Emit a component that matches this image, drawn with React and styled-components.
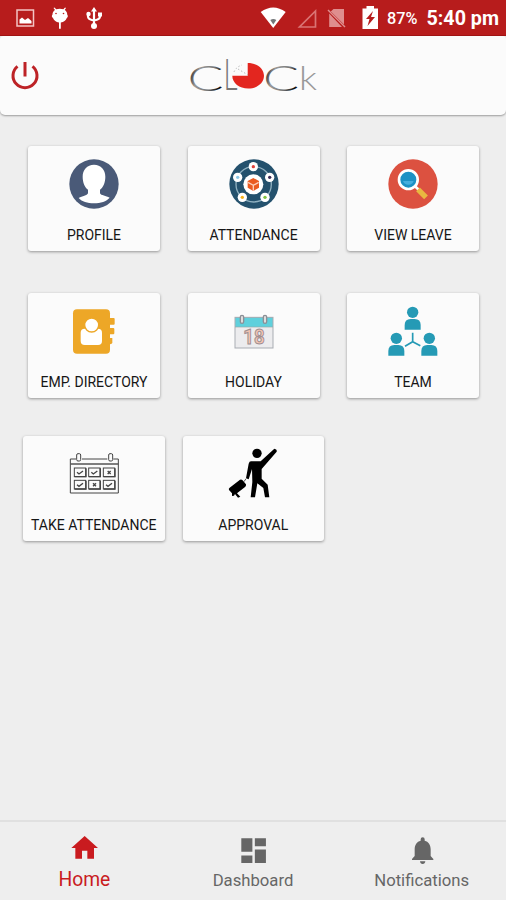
import React, { useState } from "react";
import styled, { createGlobalStyle } from "styled-components";

const GlobalStyle = createGlobalStyle`
  * {
    box-sizing: border-box;
  }
  body {
    margin: 0;
    background-color: #eee;
    font-family: Roboto, "Liberation Sans", sans-serif;
  }
`;

const Screen = styled.div`
  display: flex;
  flex-direction: column;
  height: 900px;
  width: 506px;
  overflow: hidden;
  background-color: #eee;
`;

const StatusBar = styled.div`
  flex: none;
  height: 36px;
  display: flex;
  align-items: flex-start;
  padding-left: 16px;
  color: #fff;
  background-color: #b71c1c;
  border-bottom: 1px solid #a31414;
`;

const StatusIcon = styled.svg`
  flex: none;
  display: block;
  height: 36px;
  width: ${(props) => props.$width}px;
  margin-left: ${(props) => props.$gap || 0}px;
`;

const StatusText = styled.span`
  line-height: 38px;
  white-space: nowrap;
  font-weight: ${(props) => props.$weight};
  font-size: ${(props) => props.$size}px;
  margin-left: ${(props) => props.$gap}px;
`;

const Header = styled.header`
  flex: none;
  height: 78.500px;
  display: flex;
  align-items: flex-start;
  background-color: #fbfbfb;
  border-radius: 3px 3px 5px 5px;
  box-shadow: 0 1px 2px rgba(0, 0, 0, 0.35);
`;

const PowerButton = styled.button`
  margin: 24px 0 0 10px;
  padding: 0;
  border: 0;
  background: none;
  cursor: pointer;
  svg {
    display: block;
  }
`;

const Logo = styled.svg`
  display: block;
  margin: 4px 0 0 140px;
`;

const Content = styled.main`
  flex: 1;
  padding-top: 31.500px;
`;

const CardRow = styled.div`
  display: flex;
  gap: ${(props) => (props.$wide ? 18 : 27.5)}px;
  padding-left: ${(props) => (props.$wide ? 23 : 28)}px;
  margin-bottom: ${(props) => props.$space || 0}px;
`;

const Card = styled.div`
  width: ${(props) => (props.$wide ? 141.5 : 132)}px;
  height: 105px;
  padding-top: 13px;
  display: flex;
  flex-direction: column;
  align-items: center;
  border-radius: 3px;
  cursor: pointer;
  background-color: #fbfbfb;
  box-shadow: 0 1px 3px rgba(0, 0, 0, 0.38);
`;

const CardIcon = styled.svg`
  display: block;
  flex: none;
  width: 50px;
  height: 50px;
  overflow: visible;
`;

const CardLabel = styled.span`
  margin-top: 15.500px;
  line-height: 20px;
  font-size: 14px;
  white-space: nowrap;
  color: #161616;
`;

const BottomNav = styled.nav`
  flex: none;
  height: 80px;
  display: flex;
  border-top: 2px solid #e0e0e0;
  background-color: #eee;
`;

const NavItem = styled.button`
  flex: 1;
  padding: ${(props) => (props.$active ? 10 : 11.5)}px 0 0;
  border: 0;
  background: none;
  display: flex;
  flex-direction: column;
  align-items: center;
  cursor: pointer;
  font-family: inherit;
  color: ${(props) => (props.$active ? "#c91b1f" : "#666")};
  svg {
    display: block;
    width: 32px;
    height: 32px;
  }
`;

const NavLabel = styled.span`
  line-height: ${(props) => (props.$active ? 32 : 29)}px;
  font-size: ${(props) => (props.$active ? 19.3 : 16.7)}px;
`;

const ProfileIcon = () => (
  <CardIcon viewBox="162 72 150 150">
    <circle cx="237" cy="147" r="74" fill="#4a5a78" />
    <path
      fill="#fff"
      d="M237 89c-21 0-34 15-34 36 0 17 6 31 16 39v11c-3 7-17 8-28 14 10 11 26 16 46 16s37-6 47-17c-11-6-26-6-29-13v-11c10-8 16-22 16-39 0-21-13-36-34-36z"
    />
  </CardIcon>
);

const AttendanceIcon = () => (
  <CardIcon viewBox="160 72 150 150">
    <circle cx="235" cy="147" r="74" fill="#24516d" />
    <circle
      cx="234"
      cy="148"
      r="53"
      fill="none"
      stroke="#8fb0c0"
      strokeWidth="4"
    />
    {[
      [233, 95, "#e0403a"],
      [282, 127, "#3a2a55"],
      [268, 187, "#7fc241"],
      [200, 187, "#f5b21c"],
      [186, 127, "#8cc8e8"],
    ].map(([x, y, color]) => (
      <g key={color}>
        <circle cx={x} cy={y} r="14" fill="#fff" />
        <circle cx={x} cy={y} r="5" fill={color} />
      </g>
    ))}
    <circle cx="233" cy="148" r="30" fill="#fff" />
    <path fill="#ea5b21" d="M233 129l17 9v20l-17 10-17-10v-20z" />
    <path
      d="M217 142l16 9 16-9M233 151v16"
      fill="none"
      stroke="#fbd0bd"
      strokeWidth="4"
    />
  </CardIcon>
);

const ViewLeaveIcon = () => (
  <CardIcon viewBox="158 72 150 150">
    <circle cx="233" cy="147" r="74" fill="#dc5140" />
    <path d="M239 154l12 11" stroke="#fff" strokeWidth="8" />
    <path d="M248 163l24 24" stroke="#e9b840" strokeWidth="16" />
    <circle cx="219" cy="134" r="27" fill="#1e91c4" />
    <path d="M203 138a17 17 0 0 0 32 0z" fill="#46aede" />
    <circle
      cx="219"
      cy="134"
      r="28"
      fill="none"
      stroke="#fff"
      strokeWidth="8"
    />
  </CardIcon>
);

const DirectoryIcon = () => (
  <CardIcon viewBox="162 69 150 150">
    <g fill="#eda727">
      <rect x="174" y="79" width="111" height="133" rx="12" />
      <rect x="280" y="105" width="19" height="20" rx="3" />
      <rect x="280" y="135" width="18" height="19" rx="3" />
      <path d="M280 165h12v15q-3 4-8 4h-4z" />
    </g>
    <rect x="197" y="137" width="64" height="49" rx="12" fill="#fff" />
    <circle
      cx="230"
      cy="126"
      r="21"
      fill="#fff"
      stroke="#eda727"
      strokeWidth="4"
    />
  </CardIcon>
);

const HolidayIcon = () => (
  <CardIcon viewBox="160 69 150 150">
    <rect x="178" y="103" width="114" height="92" fill="#ececee" />
    <rect x="178" y="102" width="114" height="30" fill="#5fd0dc" />
    <rect
      x="178"
      y="103"
      width="114"
      height="92"
      fill="none"
      stroke="#a9adb3"
      strokeWidth="3"
    />
    <path d="M178 132h114" stroke="#9aa" strokeWidth="2" />
    <rect x="194" y="97" width="10" height="24" rx="5" fill="#ddd" stroke="#8b8f96" strokeWidth="4" />
    <rect x="263" y="97" width="10" height="24" rx="5" fill="#ddd" stroke="#8b8f96" strokeWidth="4" />
    <text
      x="235"
      y="184"
      textAnchor="middle"
      fontSize="60"
      fontWeight="700"
      textLength="64"
      lengthAdjust="spacingAndGlyphs"
      fill="#f6c6b3"
      stroke="#a08f92"
      strokeWidth="3"
    >
      18
    </text>
  </CardIcon>
);

const Person = ({ x, y }) => (
  <g transform={`translate(${x} ${y})`}>
    <circle cx="0" cy="17" r="17" />
    <path d="M-24 69v-14q0-18 18-18h12q18 0 18 18v14z" />
  </g>
);

const TeamIcon = () => (
  <CardIcon viewBox="158 69 150 150">
    <g fill="#259ab5">
      <Person x={232} y={71} />
      <Person x={183} y={149} />
      <Person x={282} y={149} />
    </g>
    <path
      d="M232 149v27M209 190l23-14 23 12"
      fill="none"
      stroke="#259ab5"
      strokeWidth="5"
    />
  </CardIcon>
);

const TakeAttendanceIcon = () => (
  <CardIcon viewBox="161 69 150 150">
    <g fill="none" stroke="#444" strokeWidth="3">
      <path d="M182 99h-17v102h144v-102h-15M200 99h76" />
      <path d="M165 114h144" stroke="#555" strokeWidth="4" />
      <rect x="184" y="83" width="12" height="22" rx="4" />
      <rect x="280" y="83" width="12" height="22" rx="4" />
    </g>
    {[
      [177, 126, true],
      [220, 126, true],
      [264, 126, false],
      [177, 163, true],
      [220, 163, false],
      [264, 163, true],
    ].map(([x, y, checked]) => (
      <g key={`${x}-${y}`} fill="none" stroke="#444" strokeWidth="3">
        <rect x={x} y={y} width="34" height="26" />
        <path d={`M${x + 1} ${y + 26}h34v-25`} strokeWidth="4" />
        {checked ? (
          <path d={`M${x + 8} ${y + 13}l6 5 12-9`} strokeWidth="4" />
        ) : (
          <path
            d={`M${x + 13} ${y + 9}l9 9M${x + 22} ${y + 9}l-9 9`}
            strokeWidth="4"
          />
        )}
      </g>
    ))}
  </CardIcon>
);

const ApprovalIcon = () => (
  <CardIcon viewBox="160 69 150 150">
    <circle cx="247" cy="82" r="14" />
    <path d="M229 106q-5 0-7 7l-8 44 8 3 10-31 1 39-5 46h13l7-42 18 14 5 28h13l-5-38-18-18v-29l45-52q2-8-7-9l-41 38z" />
    <path d="M214 158l-6 9" stroke="#555" strokeWidth="3" />
    <path d="M196 161q4-2 7 1l11 13q1 4-2 7l-25 20 10 10-7 3-9-11-3 5-6 1v-8l-9-10q-2-4 2-7z" />
  </CardIcon>
);

const HomeIcon = () => (
  <svg viewBox="-.5 0 24 24" fill="currentColor">
    <path d="M10 20v-6h4v6h5v-8h3L12 3 2 12h3v8z" />
  </svg>
);

const DashboardIcon = () => (
  <svg viewBox="-1.500 -1.500 26 26" fill="currentColor">
    <path d="M2 2h9v11H2zM2 16h9v6H2zM13 2h9v6.500h-9zM13 11h9v11h-9z" />
  </svg>
);

const BellIcon = () => (
  <svg viewBox="-.5 -.5 24 24" fill="currentColor">
    <path d="M12 22c1.100 0 2-.9 2-2h-4c0 1.100.9 2 2 2zM20 18.200v.8H4v-.8l2-2.200v-5c0-3.200 1.600-5.800 4.500-6.400V3.500a1.500 1.500 0 0 1 3 0v1.100C16.400 5.200 18 7.800 18 11v5z" />
  </svg>
);

const cardRows = [
  {
    space: 42,
    cards: [
      { label: "PROFILE", Icon: ProfileIcon },
      { label: "ATTENDANCE", Icon: AttendanceIcon },
      { label: "VIEW LEAVE", Icon: ViewLeaveIcon },
    ],
  },
  {
    space: 38,
    cards: [
      { label: "EMP. DIRECTORY", Icon: DirectoryIcon },
      { label: "HOLIDAY", Icon: HolidayIcon },
      { label: "TEAM", Icon: TeamIcon },
    ],
  },
  {
    wide: true,
    cards: [
      { label: "TAKE ATTENDANCE", Icon: TakeAttendanceIcon },
      { label: "APPROVAL", Icon: ApprovalIcon },
    ],
  },
];

const navItems = [
  { label: "Home", Icon: HomeIcon },
  { label: "Dashboard", Icon: DashboardIcon },
  { label: "Notifications", Icon: BellIcon },
];

const Status = () => (
  <StatusBar>
    <StatusIcon $width={19} viewBox="16 0 19 36">
      <rect x="17" y="10" width="16.500" height="16" fill="none" stroke="#f3c4c4" strokeWidth="1.500" />
      <path fill="#fff" d="M19.500 23.500v-4l2.500-2 3 2.500 3-2 3.500 3v2.500z" />
    </StatusIcon>
    <StatusIcon $width={18} $gap={16} viewBox="51 0 18 36">
      <path
        fill="#fff"
        d="M52.500 14.500c0-2 1-3.500 2.500-4.500l-1.500-2 1-.5 1.700 1.800q3.600-1.300 7.200 0L65 7.500l1 .5-1.300 2c1.600 1 2.500 2.500 2.500 4.500 1 1 .8 3-.4 3.400-1 2.600-3 4.100-6 4.600v6.300h-1.800v-6.300c-3-.5-5-2-6-4.600-1.300-.4-1.500-2.400-.5-3.400z"
      />
      <circle cx="56" cy="13.500" r=".8" fill="#b71c1c" />
      <circle cx="63.500" cy="13.500" r=".8" fill="#b71c1c" />
    </StatusIcon>
    <StatusIcon $width={17} $gap={17} viewBox="86 0 17 36">
      <path
        d="M94 10v16M88 14v2.500q0 3 6 4M100 14v2.500q0 3-6 4"
        fill="none"
        stroke="#fff"
        strokeWidth="2.200"
      />
      <path fill="#fff" d="M94 7l3 4.500h-6zM98 12.500h4v4h-4z" />
      <circle cx="88.500" cy="14" r="2.200" fill="#fff" />
      <circle cx="94" cy="26" r="3" fill="#fff" />
    </StatusIcon>
    <StatusIcon $width={26} $gap={157} viewBox="260 0 26 36">
      <path fill="#fff" d="M260.700 12q12.500-9 25 0L273.200 28z" />
      <path fill="#73777a" d="M270.300 20q3-2 6 0l-3 4.500z" />
    </StatusIcon>
    <StatusIcon $width={21} $gap={11} viewBox="297 0 21 36">
      <path d="M315.500 11v16h-16z" fill="none" stroke="#da7474" strokeWidth="1.700" />
    </StatusIcon>
    <StatusIcon $width={20} $gap={9} viewBox="327 0 20 36">
      <path
        fill="#df8e8e"
        d="M333.500 9h10.500v15.500L330.800 11.500zM329.200 13.500L342 27h-12.800z"
      />
      <path d="M328 10l17 17" stroke="#df8e8e" strokeWidth="1.500" />
    </StatusIcon>
    <StatusIcon $width={17} $gap={15} viewBox="362 0 17 36">
      <path fill="#fff" d="M366.500 6h7.500v2.500h4V29h-15.500V8.500h4z" />
      <path fill="#b71c1c" d="M373 11l-7 8h3.500l-2 7 7.500-9h-4z" />
    </StatusIcon>
    <StatusText $size={16.3} $weight={500} $gap={8}>
      87%
    </StatusText>
    <StatusText $size={19.7} $weight={700} $gap={9}>
      5:40 pm
    </StatusText>
  </StatusBar>
);

const ClockLogo = () => (
  <Logo width="146" height="68" viewBox="180 40 146 68">
    <defs>
      <linearGradient id="ink" x1="0" y1="0" x2="1" y2="0.35">
        <stop offset="0" stopColor="#111" />
        <stop offset="0.2" stopColor="#333" />
        <stop offset="0.4" stopColor="#999" />
        <stop offset="0.75" stopColor="#777" />
        <stop offset="1" stopColor="#111" />
      </linearGradient>
    </defs>
    <g fontFamily="Lato, Roboto, sans-serif" fontWeight="300">
      <text x="187.500" y="90.500" fontSize="36" textLength="36" lengthAdjust="spacingAndGlyphs" fill="url(#ink)">
        C
      </text>
      <text x="223.500" y="90" fontSize="43" textLength="14" lengthAdjust="spacingAndGlyphs" fill="#777">
        L
      </text>
      <text x="263" y="90.500" fontSize="36" textLength="36" lengthAdjust="spacingAndGlyphs" fill="url(#ink)">
        C
      </text>
      <text x="299" y="90" fontSize="34" textLength="18" lengthAdjust="spacingAndGlyphs" fill="#999">
        k
      </text>
    </g>
    <path
      fill="#e3261f"
      d="M247.700 75.800V63c9.500 0 16.300 5.500 16.300 12.800S257 88.600 248.200 88.600s-15.900-5.500-15.900-12.800z"
    />
    <path
      d="M234 72q2-5 8-7M238 69l10 6"
      fill="none"
      stroke="#bbb"
      strokeDasharray="1.500 2"
    />
  </Logo>
);

const App = () => {
  const [active, setActive] = useState("Home");

  return (
    <Screen>
      <GlobalStyle />
      <Status />
      <Header>
        <PowerButton aria-label="Log out">
          <svg width="30" height="30" viewBox="10 60 30 30">
            <path
              d="M17.500 66.300a12 12 0 1 0 15 0M25 62v14.500"
              fill="none"
              stroke="#bd2226"
              strokeWidth="3"
            />
          </svg>
        </PowerButton>
        <ClockLogo />
      </Header>
      <Content>
        {cardRows.map((row, index) => (
          <CardRow key={index} $wide={row.wide} $space={row.space}>
            {row.cards.map(({ label, Icon }) => (
              <Card key={label} $wide={row.wide}>
                <Icon />
                <CardLabel>{label}</CardLabel>
              </Card>
            ))}
          </CardRow>
        ))}
      </Content>
      <BottomNav>
        {navItems.map(({ label, Icon }) => (
          <NavItem
            key={label}
            $active={label === active}
            onClick={() => setActive(label)}
          >
            <Icon />
            <NavLabel $active={label === active}>{label}</NavLabel>
          </NavItem>
        ))}
      </BottomNav>
    </Screen>
  );
};

export default App;
